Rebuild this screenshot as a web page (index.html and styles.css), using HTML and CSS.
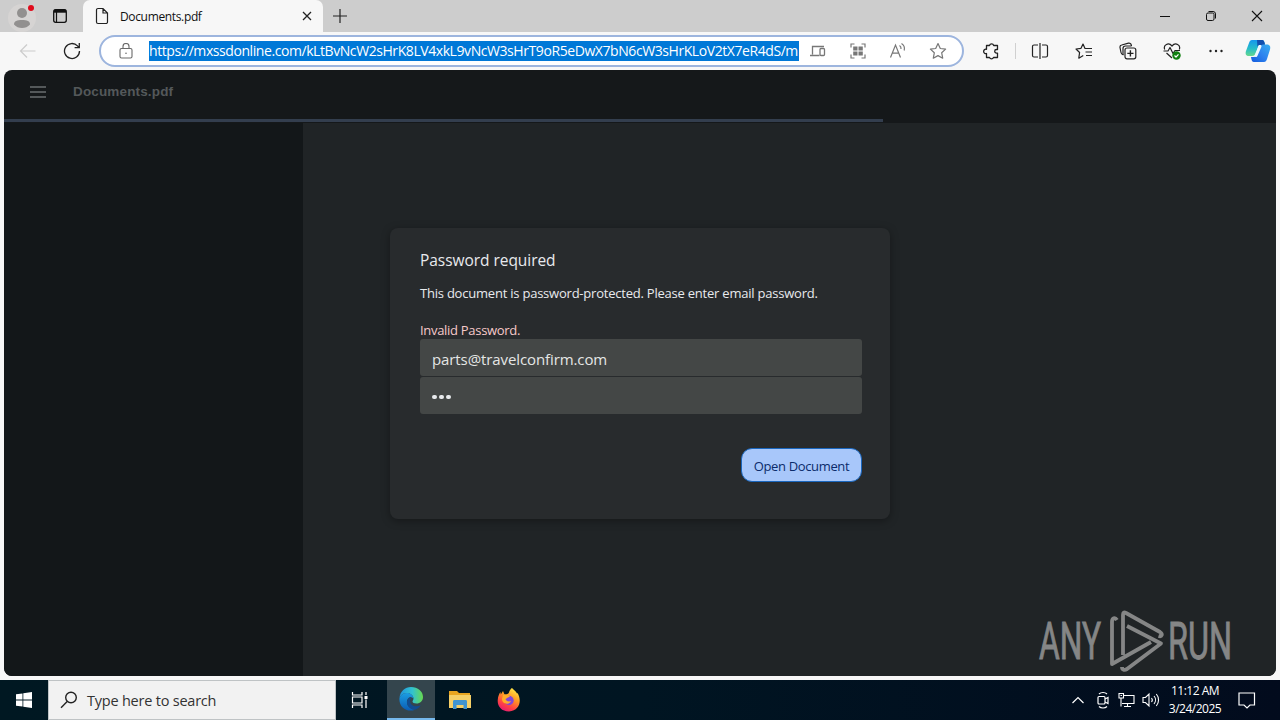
FILE: index.html
```html
<!DOCTYPE html>
<html lang="en">
<head>
  <meta charset="UTF-8">
  <meta name="viewport" content="width=device-width, initial-scale=1.0">
  <title>Documents.pdf</title>
  <link rel="stylesheet" href="styles.css">
</head>
<body>
  <div class="desktop">
    <!-- tab strip -->
    <header class="tabstrip">
      <div class="tab-actions">
        <svg class="profile" width="28" height="28" viewBox="0 0 28 28">
          <circle cx="14" cy="14" r="14" fill="#d6d4d3"/>
          <circle cx="14" cy="9" r="5" fill="#92908f"/>
          <path d="M6 20.500C6 17 9 16 14 16s8 1 8 4.500c-2 2.500-5 3.500-8 3.500s-6-1-8-3.500z" fill="#92908f"/>
          <circle cx="23" cy="4" r="3" fill="#e00b1c"/>
        </svg>
        <svg class="tab-menu" width="16" height="16" viewBox="0 0 16 16" fill="none" stroke="#111">
          <rect x="1.700" y="1.700" width="12.600" height="12.600" rx="2" stroke-width="1.300"/>
          <path d="M2 3.200h12" stroke-width="3"/><path d="M4.500 4v10" stroke-width="1.200"/>
        </svg>
      </div>
      <div class="tab">
        <svg width="14" height="18" viewBox="0 0 14 18" fill="none" stroke="#222" stroke-width="1.200">
          <path d="M1.500 3a1.500 1.500 0 0 1 1.500-1.500h5l4.500 4.500v9a1.500 1.500 0 0 1-1.500 1.500H3A1.500 1.500 0 0 1 1.500 15zM8 1.500V6h4.500"/>
        </svg>
        <span class="tab-title">Documents.pdf</span>
        <svg class="tab-close" width="10" height="10" viewBox="0 0 10 10" stroke="#222" stroke-width="1.300"><path d="M1 1l8 8M9 1L1 9"/></svg>
      </div>
      <svg class="new-tab" width="14" height="14" viewBox="0 0 14 14" stroke="#222" stroke-width="1.200"><path d="M7 0v14M0 7h14"/></svg>
      <div class="window-controls">
        <svg width="12" height="12" viewBox="0 0 12 12" stroke="#111"><path d="M1 6.500h10"/></svg>
        <svg width="12" height="12" viewBox="0 0 12 12" fill="none" stroke="#111"><rect x="1.500" y="3" width="7.500" height="7.500" rx="1.500"/><path d="M3.500 1.500H8A2.500 2.500 0 0 1 10.500 4v4.500"/></svg>
        <svg width="12" height="12" viewBox="0 0 12 12" stroke="#111" stroke-width="1.100"><path d="M1 1l10 10M11 1L1 11"/></svg>
      </div>
    </header>

    <!-- toolbar -->
    <nav class="toolbar">
      <svg class="back" width="18" height="16" viewBox="0 0 18 16" fill="none" stroke="#ccc" stroke-width="1.200"><path d="M16.500 8H1.500M8 1.500L1.500 8 8 14.500"/></svg>
      <svg class="reload" width="18" height="18" viewBox="0 0 18 18" fill="none" stroke="#222" stroke-width="1.300"><path d="M16.500 9a7.500 7.500 0 1 1-2-5.100l1.500 1.600M16.300 1v4.700h-4.700"/></svg>
      <div class="address">
        <svg class="lock" width="14" height="16" viewBox="0 0 14 16" fill="none" stroke="#6a6a6a" stroke-width="1.100"><rect x="1" y="5.500" width="12" height="9.500" rx="1.500"/><path d="M4 5.500V3.500a3 3 0 0 1 6 0v2"/><circle cx="7" cy="10.300" r=".8" fill="#6a6a6a" stroke="none"/></svg>
        <span class="url">https://mxssdonline.com/kLtBvNcW2sHrK8LV4xkL9vNcW3sHrT9oR5eDwX7bN6cW3sHrKLoV2tX7eR4dS/m</span>
        <div class="address-icons">
          <svg width="18" height="18" viewBox="0 0 18 18" fill="none" stroke="#777" stroke-width="1.300"><path d="M3.500 12.500V4.500H15M1 13.500h9.500"/><rect x="11" y="6.500" width="4.500" height="7" rx="1"/></svg>
          <svg width="18" height="18" viewBox="0 0 18 18" fill="none" stroke="#777" stroke-width="1.200"><path d="M2 5.500V2h3.500M12.500 2H16v3.500M16 12.500V16h-3.500M5.500 16H2v-3.500"/><path d="M4.200 4.500h4.300v4H4.200zM9.500 4.500h4.300v4H9.500zM4.200 9.500h4.300v4H4.200zM9.500 9.500h4.300v4H9.500z" fill="#777" stroke="none"/></svg>
          <svg width="18" height="18" viewBox="0 0 18 18" fill="none" stroke="#777" stroke-width="1.200"><path d="M1.500 15.500L6.500 3l5 12.500M3.200 11.200h6.600M10.500 3.500c1.200.7 1.700 2 1.500 3.500M12.500 1.500c2.400 1.400 3.400 4 2.700 7"/></svg>
          <svg width="18" height="18" viewBox="0 0 18 18" fill="none" stroke="#777" stroke-width="1.200" stroke-linejoin="round"><path d="M9 1.500l2.300 5 5.300.6-3.900 3.700 1 5.400L9 13.600l-4.700 2.600 1-5.400L1.400 7.100l5.300-.6z"/></svg>
        </div>
      </div>
      <div class="toolbar-icons">
        <svg class="extensions" width="18" height="18" viewBox="0 0 18 18" fill="none" stroke="#222" stroke-width="1.300" stroke-linejoin="round"><path d="M4.500 3.500h3a2.200 2.200 0 0 1 4.200 0h3.800v4h-1a1.800 1.800 0 0 0 0 3.600h1v4.400h-4a2.200 2.200 0 0 1-4 0h-3v-4a2.200 2.200 0 1 1 0-4.200z"/></svg>
        <i class="divider"></i>
        <svg width="18" height="18" viewBox="0 0 18 18" fill="none" stroke="#222" stroke-width="1.200"><path d="M7 3H3a1.500 1.500 0 0 0-1.500 1.500v9A1.500 1.500 0 0 0 3 15h4M11 3h4a1.500 1.500 0 0 1 1.500 1.500v9A1.500 1.500 0 0 1 15 15h-4M9 1v16"/></svg>
        <svg width="18" height="18" viewBox="0 0 18 18" fill="none" stroke="#222" stroke-width="1.200" stroke-linejoin="round"><path d="M11 6.500H10L8 2 6 6.300 1 7l3.600 3.500-.8 5.700 4.500-2.600M11 6.500h6M10.500 10H17M11 13.500h6"/></svg>
        <svg width="18" height="18" viewBox="0 0 18 18" fill="none" stroke="#222" stroke-width="1.200"><path d="M4.500 13C3 12.500 2.200 11.700 2 10.500L1 5.500A2.200 2.200 0 0 1 2.700 3L9.500 1.200A2.300 2.300 0 0 1 12.300 3l.2 1"/><rect x="6" y="6" width="10.800" height="10.800" rx="2" fill="#f7f7f7"/><path d="M4 13V6.500A2.500 2.500 0 0 1 6.500 4h6"/><path d="M11.400 8.300v6.200M8.300 11.400h6.200" stroke-width="1.400"/></svg>
        <svg width="18" height="18" viewBox="0 0 18 18" fill="none" stroke="#222" stroke-width="1.200" stroke-linejoin="round"><path d="M1.700 7.500C0 3 5.500-.2 9 4c3.500-4.200 9-1 7.300 3.500M.5 9H5l2-3.500 3 6L12 8.500h5M3.500 11L9 16"/><circle cx="13.500" cy="13.500" r="4.200" fill="#108010" stroke="none"/><path d="M11.500 13.500l1.500 1.500 2.500-2.600" stroke="#fff"/></svg>
        <svg width="18" height="18" viewBox="0 0 18 18" fill="#222"><circle cx="3.500" cy="9" r="1.200"/><circle cx="9" cy="9" r="1.200"/><circle cx="14.500" cy="9" r="1.200"/></svg>
      </div>
      <svg class="copilot" width="26" height="24" viewBox="0 0 26 24">
        <defs>
          <linearGradient id="cpA" x1="0" y1="0" x2="0" y2="1"><stop offset="0" stop-color="#1597ee"/><stop offset=".55" stop-color="#27bdc7"/><stop offset="1" stop-color="#66d88d"/></linearGradient>
          <linearGradient id="cpB" x1="1" y1="0" x2="0" y2="1"><stop offset="0" stop-color="#38aff0"/><stop offset=".5" stop-color="#2d83ef"/><stop offset="1" stop-color="#145bdd"/></linearGradient>
        </defs>
        <path d="M7 1h10c2 0 2.500 2 3 4h-4c-2 0-2.500 1-3 3l-2 6c-.7 2-1.700 3-4 3H4c-3 0-4-2-3-5L4 4c.6-2 1.500-3 3-3z" fill="url(#cpA)"/>
        <path d="M12 1h5c2 0 2.500 2 3 5h-5c-1.500 0-2.200.6-2.600 1.700z" fill="#124fae"/>
        <path d="M19 23H9c-2 0-2.500-2-3-5h3c2 0 3-1 3.600-3l2-6c.7-2 1.500-3.500 4-3.500H22c3 0 3.800 2.500 3 5L22 20c-.6 2-1.500 3-3 3z" fill="url(#cpB)"/>
        <path d="M15 7.500l-4 9" stroke="#eef8ff" stroke-width="3" stroke-linecap="round"/>
      </svg>
    </nav>

    <!-- pdf viewer page -->
    <main class="viewer">
      <div class="viewer-bar">
        <svg width="16" height="12" viewBox="0 0 16 12" fill="#54585a"><path d="M0 0h16v2H0zM0 5h16v2H0zM0 10h16v2H0z"/></svg>
        <h1>Documents.pdf</h1>
      </div>
      <div class="progress"></div>
      <div class="viewer-body">
        <aside class="sidebar"></aside>
        <section class="stage">
          <form class="dialog">
            <h2>Password required</h2>
            <p class="message">This document is password-protected. Please enter email password.</p>
            <p class="error">Invalid Password.</p>
            <div class="field">parts@travelconfirm.com</div>
            <div class="field dots"><i></i><i></i><i></i></div>
            <button class="open" type="button">Open Document</button>
          </form>
          <svg class="watermark" width="200" height="64" viewBox="0 0 200 64">
            <g fill="#858686" stroke="#858686" stroke-width=".9" font-family="Roboto" font-size="51">
              <text x="3" y="50" textLength="62" lengthAdjust="spacingAndGlyphs">ANY</text>
              <text x="132" y="50" textLength="64" lengthAdjust="spacingAndGlyphs">RUN</text>
            </g>
            <g fill="none" stroke="#858686" stroke-width="3.800" stroke-linejoin="round">
              <path d="M81 11c-2-3-5-2-5 2v42l39-22"/>
              <path d="M87 46V6c0-2.500 1-3 3-2L124 23c3 2 2 5-1.500 4"/>
              <path d="M91 17l34 17.500L91 60c-2.500 1.500-5 1-5-2"/>
            </g>
          </svg>
        </section>
      </div>
    </main>

    <!-- taskbar -->
    <footer class="taskbar">
      <div class="start"><svg width="16" height="16" viewBox="0 0 16 16" fill="#fff"><path d="M0 2.300L6.500 1.400v6.200H0zM7.300 1.300L16 0v7.600H7.300zM0 8.400h6.500v6.200L0 13.700zM7.300 8.400H16V16l-8.700-1.300z"/></svg></div>
      <div class="search">
        <svg width="18" height="18" viewBox="0 0 18 18" fill="none" stroke="#222" stroke-width="1.400"><circle cx="11" cy="6.500" r="5.300"/><path d="M7.200 10.500L1 16.800"/></svg>
        <span>Type here to search</span>
      </div>
      <div class="app">
        <svg width="18" height="18" viewBox="0 0 18 18" fill="none" stroke="#fff" stroke-width="1.200"><path d="M1.500 1v3h9.500V1M1.500 17v-3h9.500v3M1.500 6h9.500v6H1.500zM15 1v3M15 8.500V17"/><path d="M13.500 5h3v3h-3z" fill="#fff" stroke="none"/></svg>
      </div>
      <div class="app active">
        <svg width="24" height="24" viewBox="0 0 24 24">
          <defs>
            <linearGradient id="edA" x1="0" y1=".3" x2="1" y2=".3"><stop offset="0" stop-color="#1f94df"/><stop offset=".55" stop-color="#32c2cf"/><stop offset="1" stop-color="#68d94f"/></linearGradient>
            <linearGradient id="edB" x1="0" y1="0" x2="0" y2="1"><stop offset="0" stop-color="#1b9de2"/><stop offset="1" stop-color="#0b5cb4"/></linearGradient>
          </defs>
          <path d="M.5 11C1 4.500 6 0 12 0c7 0 12 4.500 12 10 0 4-3 6.500-6.500 6.500-2.500 0-4-1-4-2 0-.8 1-1.200 1-3C14.500 8.500 11.500 6 8 6 4 6 1.500 8 .5 11z" fill="url(#edA)"/>
          <path d="M.5 11C1.500 8 4 6 8 6c3.500 0 6.500 2.500 6.500 5.500-1-1-2-1.500-3-1.500C9 10.500 7.500 13 8 16c.6 4 4.500 6.500 8 6.700C8 26-.5 20 .5 11z" fill="url(#edB)"/>
          <path d="M11 10.500c-2 1-3.300 3-3 5.500.5 4 4.500 6.700 8 6.700 2.500-.8 4.500-2.500 5.700-4.500-4 2-10.500 1.500-10.700-4.200 0-1.500 1-2.500 1-3z" fill="#114c91"/>
        </svg>
      </div>
      <div class="app">
        <svg width="22" height="20" viewBox="0 0 22 20"><path d="M0 1h8l2 2h11v15H0z" fill="#e8a520"/><path d="M0 5h22v13H0z" fill="#f5cf67"/><path d="M4 19v-7.500c0-1 .6-1.500 1.500-1.500h11c1 0 1.500.5 1.500 1.500V19h-3.500v-4h-7v4z" fill="#3f94d1"/></svg>
      </div>
      <div class="app">
        <svg width="24" height="24" viewBox="0 0 24 24">
          <defs><linearGradient id="ff" x1=".8" y1="0" x2=".3" y2="1"><stop offset="0" stop-color="#fff04a"/><stop offset=".4" stop-color="#ff9a23"/><stop offset=".75" stop-color="#ff4045"/><stop offset="1" stop-color="#e51b72"/></linearGradient></defs>
          <path d="M15 0c2 2 4 3.500 5 5.500l.5-.5c4.500 7 2.500 18-8.500 18.500C4 23.500 0 18 .8 11.500 1 8.500 2 6 3.500 4l.3 2.500L6 3l1.500 3.500c2 0 4-.5 4.500-2C12.500 2.500 13.500 1 15 0z" fill="url(#ff)"/>
          <circle cx="12" cy="12.500" r="4.700" fill="#8147d8"/>
          <path d="M6 7c3-1 6 0 7 2-2.500 0-3 1.500-4.500 2 .5 2 3 3 5.500 2-2 4.500-9 3-9-2z" fill="#ffad28"/>
        </svg>
      </div>
      <div class="tray">
        <svg class="chevron" width="12" height="8" viewBox="0 0 12 8" fill="none" stroke="#fff" stroke-width="1.200"><path d="M.5 7L6 1.500 11.500 7"/></svg>
        <svg class="camera" width="12" height="18" viewBox="0 0 12 18" fill="none" stroke="#fff" stroke-width="1.200"><rect x="1" y="5.500" width="7" height="7.500" rx="1"/><path d="M8 8l3-1.500v6L8 11M2 3c2-2 6-2 8 0M2 15.500c2 2 6 2 8 0"/></svg>
        <svg width="17" height="16" viewBox="0 0 17 16" fill="none" stroke="#fff" stroke-width="1.100"><path d="M6 3.500h10v8H4M9.500 11.500v3M6 14.500h7M3 6v8.500M1 1.500h4.500v4.500H1zM2.500 3.500h1.500"/></svg>
        <svg width="18" height="16" viewBox="0 0 18 16" fill="none" stroke="#fff" stroke-width="1.100"><path d="M1 5.500h2.500L7 2v12l-3.500-3.500H1zM9.500 6c1 1.200 1 2.800 0 4M12 4c2 2.300 2 5.700 0 8M14.300 2c3 3.500 3 8.500 0 12"/></svg>
        <div class="clock"><span>11:12 AM</span><span>3/24/2025</span></div>
        <svg class="notice" width="18" height="18" viewBox="0 0 18 18" fill="none" stroke="#fff" stroke-width="1.200"><path d="M1 2h15.500v12H12l-3 3-3-3H1z"/></svg>
      </div>
    </footer>
  </div>
</body>
</html>
```

FILE: styles.css
```css
* {
  box-sizing: border-box;
}
html, body, h1, h2, p {
  margin: 0;
  padding: 0;
}
body {
  font-family: "Open Sans", "Noto Sans", sans-serif;
  overflow: hidden;
}
svg {
  display: block;
  flex: none;
}
.desktop {
  width: 1280px;
  height: 720px;
  display: flex;
  flex-direction: column;
  background: #f7f7f7;
}

/* tab strip */
.tabstrip {
  height: 32px;
  flex: none;
  display: flex;
  align-items: center;
  background: #cdcdcd;
}
.tab-actions {
  width: 83px;
  display: flex;
  align-items: center;
  padding-left: 8px;
  gap: 16px;
}
.profile {
  margin-top: 4px;
}
.tab {
  width: 240px;
  height: 32px;
  display: flex;
  align-items: center;
  padding: 0 11px 0 12px;
  background: #f7f7f7;
  border-radius: 7px 7px 0 0;
}
.tab-title {
  flex: 1;
  margin-left: 11px;
  font-size: 12px;
  letter-spacing: -.35px;
  color: #111;
}
.new-tab {
  margin-left: 10px;
}
.window-controls {
  margin-left: auto;
  padding-right: 17px;
  display: flex;
  gap: 34px;
}

/* toolbar */
.toolbar {
  height: 38px;
  flex: none;
  display: flex;
  align-items: center;
  padding-left: 19px;
}
.reload {
  margin-left: 26px;
}
.address {
  width: 865px;
  height: 32px;
  margin-left: 18px;
  display: flex;
  align-items: center;
  padding-left: 18px;
  background: #fff;
  border: 2px solid #9db5de;
  border-radius: 16px;
}
.url {
  width: 650px;
  height: 20px;
  margin-left: 16px;
  white-space: nowrap;
  font-size: 14px;
  line-height: 20px;
  letter-spacing: -.425px;
  color: #fff;
  background: #0078d7;
}
.address-icons {
  display: flex;
  gap: 22px;
  margin-left: 10px;
}
.toolbar-icons {
  display: flex;
  align-items: center;
  gap: 26px;
  margin-left: 18px;
}
.extensions {
  margin-right: -11px;
}
.divider {
  width: 1px;
  height: 16px;
  margin-right: -11px;
  background: #d0d0d0;
}
.copilot {
  margin-left: 20px;
}

/* page */
.viewer {
  height: 606px;
  flex: none;
  margin: 0 4px 4px;
  display: flex;
  flex-direction: column;
  overflow: hidden;
  border-radius: 8px;
  background: #15181a;
}
.viewer-bar {
  height: 49px;
  flex: none;
  display: flex;
  align-items: center;
  padding: 0 26px 5px;
}
.viewer-bar h1 {
  margin: 0 0 2px 27px;
  font: bold 13.500px "Liberation Sans", sans-serif;
  letter-spacing: .15px;
  color: #54585a;
}
.progress {
  width: 879px;
  height: 3px;
  flex: none;
  background: #333e4e;
}
.viewer-body {
  flex: 1;
  display: flex;
  margin-top: 1px;
}
.sidebar {
  width: 299px;
  background: #131719;
}
.stage {
  flex: 1;
  position: relative;
  padding: 105px 0 0 87px;
  background: #202426;
}
.dialog {
  width: 500px;
  height: 291px;
  display: flex;
  flex-direction: column;
  padding: 21px 28px 0 30px;
  border-radius: 8px;
  background: #282b2d;
  box-shadow: 0 2px 8px rgba(0, 0, 0, .35);
}
.dialog h2 {
  font-size: 15.500px;
  font-weight: 500;
  line-height: 22px;
  letter-spacing: -.05px;
  color: #e8eaed;
}
.message {
  margin-top: 12px;
  font-size: 13px;
  line-height: 20px;
  letter-spacing: -.22px;
  color: #e8eaed;
}
.error {
  margin-top: 18px;
  font-size: 13px;
  line-height: 18px;
  letter-spacing: -.3px;
  color: #f6c9ca;
}
.field {
  height: 37px;
  padding: 0 12px;
  line-height: 41px;
  font-size: 15px;
  letter-spacing: -.1px;
  color: #e4e6e5;
  background: #444746;
  border-radius: 3px;
}
.dots {
  margin-top: 1px;
  display: flex;
  align-items: center;
  gap: 2.500px;
  padding-top: 3px;
}
.dots i {
  width: 4.500px;
  height: 4.500px;
  border-radius: 50%;
  background: #e8eaed;
}
.open {
  width: 121px;
  height: 34px;
  align-self: flex-end;
  margin-top: 34px;
  padding: 1px 0 0;
  font: 13px "Open Sans", "Noto Sans", sans-serif;
  letter-spacing: -.35px;
  white-space: nowrap;
  color: #0b2b6a;
  background: #a8c7fa;
  border: 1px solid #1a66bd;
  border-radius: 11px;
}
.watermark {
  position: absolute;
  right: 40px;
  bottom: 3px;
}

/* taskbar */
.taskbar {
  height: 40px;
  flex: none;
  display: flex;
  color: #fff;
  background: linear-gradient(90deg, #001822, #001522 50%, #020b1d);
}
.start, .app {
  width: 48px;
  display: flex;
  align-items: center;
  justify-content: center;
}
.app {
  margin-right: 1px;
}
.search {
  width: 288px;
  display: flex;
  align-items: center;
  padding-left: 11px;
  background: #f2f2f2;
  border: 1px solid #bfc3c5;
}
.search span {
  margin-left: 9px;
  font-size: 14.500px;
  letter-spacing: -.22px;
  color: #333;
}
.active {
  margin-left: 2px;
  background: #34454d;
  border-bottom: 2px solid #76b9ed;
}
.tray {
  margin-left: auto;
  display: flex;
  align-items: center;
  gap: 7px;
  padding-right: 24px;
}
.chevron {
  margin-right: 6px;
}
.camera {
  margin-right: 2px;
}
.clock {
  width: 56px;
  display: flex;
  flex-direction: column;
  align-items: center;
  font-size: 12px;
  line-height: 18px;
  letter-spacing: -.5px;
  white-space: nowrap;
}
.notice {
  margin-left: 8px;
}
```
